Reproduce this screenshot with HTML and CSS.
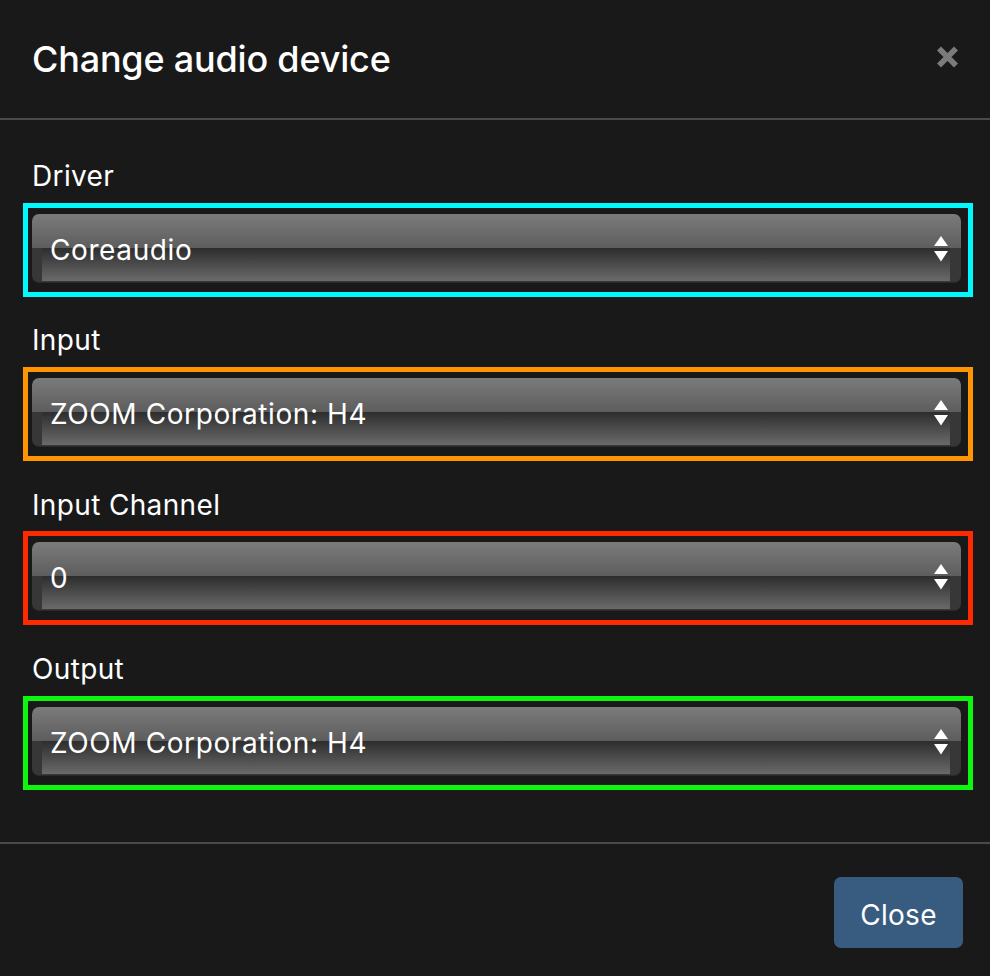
FILE: index.html
```html
<!DOCTYPE html>
<html lang="en">
<head>
<meta charset="utf-8">
<title>Change audio device</title>
<link rel="stylesheet" href="styles.css">
</head>
<body>
<div class="modal">
  <header class="modal-header">
    <h4 class="modal-title">Change audio device</h4>
    <button class="close" type="button" aria-label="Close">
      <svg width="23" height="22" viewBox="0 0 23 22"><path d="M3 2.5 L20 19.5 M20 2.5 L3 19.5" stroke="#7b7b7b" stroke-width="5.6" fill="none"/></svg>
    </button>
  </header>
  <section class="modal-body">
    <div class="form-group">
      <label class="label">Driver</label>
      <div class="frame frame-cyan">
        <div class="select"><span class="value">Coreaudio</span><svg class="arrows" width="14" height="26" viewBox="0 0 14 26"><path d="M7 0 L14 10 L0 10 Z M0 15 L14 15 L7 25.5 Z" fill="#fff"/></svg></div>
      </div>
    </div>
    <div class="form-group">
      <label class="label">Input</label>
      <div class="frame frame-orange">
        <div class="select"><span class="value">ZOOM Corporation: H4</span><svg class="arrows" width="14" height="26" viewBox="0 0 14 26"><path d="M7 0 L14 10 L0 10 Z M0 15 L14 15 L7 25.5 Z" fill="#fff"/></svg></div>
      </div>
    </div>
    <div class="form-group">
      <label class="label">Input Channel</label>
      <div class="frame frame-red">
        <div class="select"><span class="value">0</span><svg class="arrows" width="14" height="26" viewBox="0 0 14 26"><path d="M7 0 L14 10 L0 10 Z M0 15 L14 15 L7 25.5 Z" fill="#fff"/></svg></div>
      </div>
    </div>
    <div class="form-group">
      <label class="label">Output</label>
      <div class="frame frame-green">
        <div class="select"><span class="value">ZOOM Corporation: H4</span><svg class="arrows" width="14" height="26" viewBox="0 0 14 26"><path d="M7 0 L14 10 L0 10 Z M0 15 L14 15 L7 25.5 Z" fill="#fff"/></svg></div>
      </div>
    </div>
  </section>
  <footer class="modal-footer">
    <button class="btn-primary" type="button">Close</button>
  </footer>
</div>
</body>
</html>
```
FILE: styles.css
```css
html, body {
  margin: 0;
  padding: 0;
  background: #191919;
}
body {
  font-family: Inter, "Noto Sans", "Liberation Sans", sans-serif;
  color: #fff;
}
.modal {
  width: 990px;
  height: 976px;
  display: flex;
  flex-direction: column;
}
.modal-header {
  box-sizing: border-box;
  height: 120px;
  padding: 39px 31px 0 32px;
  border-bottom: 2px solid #4a4a4a;
  display: flex;
  justify-content: space-between;
  align-items: flex-start;
}
.modal-title {
  margin: 0;
  font-size: 36px;
  line-height: 40px;
  font-weight: 500;
  letter-spacing: -0.2px;
}
.close {
  margin-top: 7px;
  padding: 0;
  border: 0;
  background: none;
  width: 23px;
  height: 22px;
}
.close svg { display: block; }
.modal-body {
  padding: 40px 17px 24px 23px;
}
.form-group {
  margin-bottom: 27.7px;
}
.label {
  display: block;
  margin: 0 0 10.7px 9px;
  font-size: 28px;
  line-height: 32px;
  font-weight: 400;
  letter-spacing: 0.35px;
}
.frame {
  box-sizing: border-box;
  height: 94px;
  border: 5px solid;
  padding: 6px 7px 9px 4px;
}
.frame-cyan { border-color: #00fbff; }
.frame-orange { border-color: #ff9500; }
.frame-red { border-color: #ff2a00; }
.frame-green { border-color: #0ef50e; }
.select {
  height: 69px;
  border-radius: 7px;
  display: flex;
  align-items: center;
  justify-content: space-between;
  padding: 0 13px 0 18px;
  background:
    linear-gradient(#7b7b7b, #5d5d5d) 0 0 / 100% 34px no-repeat,
    linear-gradient(#2d2d2d, #6a6a6a) 10px 34px / calc(100% - 21px) 33px no-repeat,
    #373737;
  box-shadow: inset 0 -1px 0 #2a2a2a;
}
.value {
  font-size: 28px;
  line-height: 69px;
  padding-top: 4px;
  letter-spacing: 0.6px;
}
.arrows {
  display: block;
  margin-top: 1px;
}
.modal-footer {
  flex: 1;
  border-top: 2px solid #4a4a4a;
  display: flex;
  justify-content: flex-end;
  align-items: flex-start;
  padding: 33px 27px 0 0;
}
.btn-primary {
  box-sizing: border-box;
  width: 129px;
  height: 71px;
  border: 0;
  border-radius: 7px;
  background: #385b80;
  color: #fff;
  font-family: Inter, "Noto Sans", "Liberation Sans", sans-serif;
  font-size: 28px;
  line-height: 66px;
  padding: 5px 0 0;
  letter-spacing: 0.3px;
}
```
